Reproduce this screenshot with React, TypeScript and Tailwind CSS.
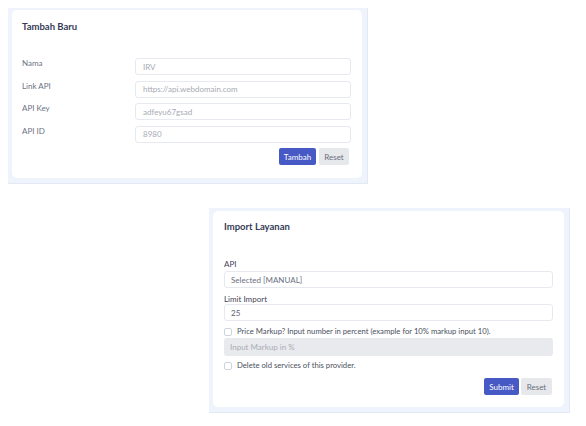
import React from 'react';

const font = { fontFamily: 'Lato, "Noto Sans", sans-serif' };

function Field({ label, value }: { label: string; value: string }) {
    return (
        <div className="flex items-start h-[22.5px]">
            <div className="w-[113px] text-[8px] leading-[10px] text-[#6c727f]">{label}</div>
            <div className="w-[216px] h-[17px] flex items-center px-[7px] border border-[#e6e9ef] rounded-[3px] text-[8px] text-[#a7abb3]">
                {value}
            </div>
        </div>
    );
}

function Check({ label }: { label: string }) {
    return (
        <div className="flex items-center gap-[5px] h-[12px]">
            <div className="w-[8px] h-[8px] border border-[#cfd4dc] rounded-[2px] bg-white" />
            <span className="text-[7.7px] text-[#4b5060]">{label}</span>
        </div>
    );
}

export default function App() {
    return (
        <div className="w-[586px] h-[426px] bg-white relative" style={font}>
            <div className="pt-[8px] pl-[8px]">
                <div className="w-[360px] bg-[#eef3fc] pt-[2px] pl-[4px] pr-[5px] pb-[5px] border-r border-b border-[#e2e8f4]">
                    <div className="bg-white rounded-[5px] h-[168px] pl-[10px] pt-[11px]">
                        <h1 className="text-[9.5px] font-bold text-[#353b57] leading-[12px]">Tambah Baru</h1>
                        <div className="mt-[25px]">
                            <Field label="Nama" value="IRV" />
                            <Field label="Link API" value="https://api.webdomain.com" />
                            <Field label="API Key" value="adfeyu67gsad" />
                            <Field label="API ID" value="8980" />
                        </div>
                        <div className="flex justify-end gap-[3px] w-[327px]">
                            <button className="w-[37px] h-[17px] rounded-[2px] bg-[#4759c4] text-white text-[8px]">Tambah</button>
                            <button className="w-[30px] h-[17px] rounded-[2px] bg-[#e6e8ec] text-[#6b7080] text-[8px]">Reset</button>
                        </div>
                    </div>
                </div>
            </div>
            <div className="pl-[209px] mt-[24px]">
                <div className="w-[361px] bg-[#eef3fc] pt-[3px] pl-[4px] pr-[5px] pb-[5px] border-r border-b border-[#e2e8f4]">
                    <div className="bg-white rounded-[5px] h-[196px] pl-[11px] pr-[11px] pt-[10px]">
                        <h1 className="text-[9.5px] font-bold text-[#353b57] leading-[12px]">Import Layanan</h1>
                        <div className="mt-[26px] text-[8px] text-[#3f4456] leading-[10px]">API</div>
                        <div className="mt-[2px] h-[17px] flex items-center px-[6px] border border-[#e6e9ef] rounded-[3px] text-[8px] text-[#6b7080]">
                            Selected [MANUAL]
                        </div>
                        <div className="mt-[6px] text-[8px] text-[#3f4456] leading-[10px]">Limit Import</div>
                        <div className="h-[17px] flex items-center px-[6px] border border-[#e6e9ef] rounded-[3px] text-[8px] text-[#5b6070]">
                            25
                        </div>
                        <div className="mt-[5px]">
                            <Check label="Price Markup? Input number in percent (example for 10% markup input 10)." />
                        </div>
                        <div className="h-[18px] flex items-center px-[6px] rounded-[3px] bg-[#e8eaee] text-[8px] text-[#a9adb5]">
                            Input Markup in %
                        </div>
                        <div className="mt-[4px]">
                            <Check label="Delete old services of this provider." />
                        </div>
                        <div className="flex justify-end gap-[2px] mt-[6px] pr-[1px]">
                            <button className="w-[35px] h-[17px] rounded-[2px] bg-[#4759c4] text-white text-[8px]">Submit</button>
                            <button className="w-[31px] h-[17px] rounded-[2px] bg-[#e6e8ec] text-[#6b7080] text-[8px]">Reset</button>
                        </div>
                    </div>
                </div>
            </div>
        </div>
    );
}
